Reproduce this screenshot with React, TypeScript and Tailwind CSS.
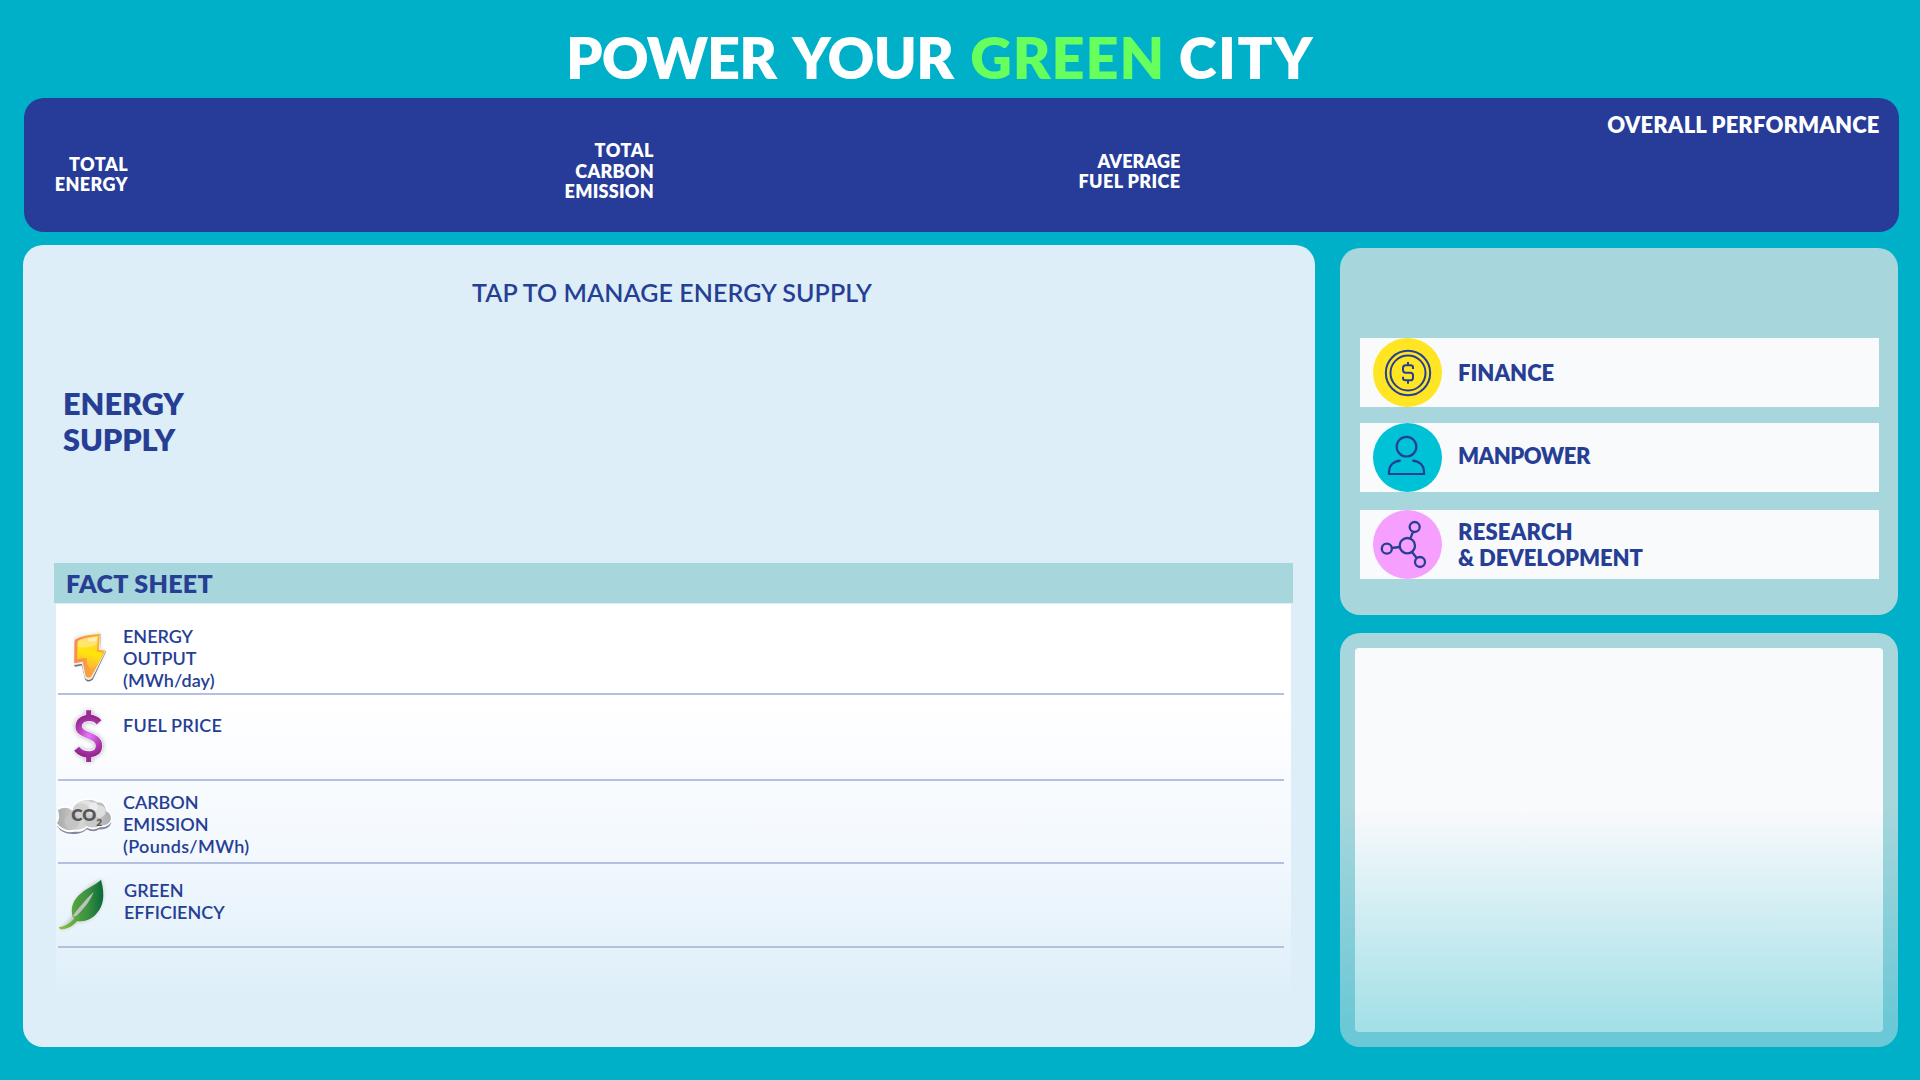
import React from 'react';

function BoltIcon() {
  return (
    <svg viewBox="54 6 132 174" className="ml-[11px] mt-[23px] h-[58px] w-[44px] overflow-visible">
      <defs>
        <linearGradient id="boltFill" x1="0.6" y1="0" x2="0.4" y2="1">
          <stop offset="0" stopColor="#ffc930" />
          <stop offset="0.5" stopColor="#ffe60a" />
          <stop offset="1" stopColor="#fbb03c" />
        </linearGradient>
        <linearGradient id="boltEdge" x1="0" y1="0.3" x2="1" y2="0.4">
          <stop offset="0" stopColor="#f98a54" />
          <stop offset="1" stopColor="#fdb52a" />
        </linearGradient>
        <filter id="glow" x="-40%" y="-40%" width="180%" height="180%">
          <feGaussianBlur stdDeviation="7" />
        </filter>
      </defs>
      <path d="M80 40Q115 34 152 26L148 78L166 80L126 158L114 158L103 112L80 118Z" fill="#777" opacity="0.5" filter="url(#glow)" />
      <path d="M80 42Q115 36 152 28L150 75L168 79L129 162Q119 171 111 162L101 118L79 122Z" fill="#737383" stroke="#737383" strokeWidth="6" strokeLinejoin="round" />
      <path d="M78 44Q86 31 152 25L150 72L168 76L128 157Q118 167 110 157L101 113L76 117Z" fill="#f3f1ee" stroke="#f3f1ee" strokeWidth="6" strokeLinejoin="round" />
      <path d="M79 48Q86 36 150 29L147 76L165 79L126 152Q119 160 112 152L103 107L78 112Z" fill="url(#boltEdge)" stroke="url(#boltEdge)" strokeWidth="5" strokeLinejoin="round" />
      <path d="M86 48Q98 39 148 33L143 80L161 83Q152 118 126 134Q111 118 113 98L84 103Z" fill="url(#boltFill)" />
      <path d="M86 49Q98 40 147 34L143 58Q120 72 85 66Z" fill="#fff" opacity="0.35" />
      <path d="M116 40L145 35L143 48Q130 52 118 49Z" fill="#fff" opacity="0.45" />
    </svg>
  );
}

function DollarIcon() {
  return (
    <svg viewBox="96 321 99 174" className="ml-[16px] mt-[12px] h-[58px] w-[33px] overflow-visible">
      <defs>
        <radialGradient id="dollarFill" gradientUnits="userSpaceOnUse" cx="147" cy="408" r="62">
          <stop offset="0" stopColor="#e67cfb" />
          <stop offset="0.5" stopColor="#b844bd" />
          <stop offset="1" stopColor="#93238e" />
        </radialGradient>
      </defs>
      <g fill="none" strokeLinejoin="miter">
        <g stroke="#777" opacity="0.5" strokeWidth="24" filter="url(#glow)">
          <path d="M175 366C158 351 116 350 115 380C115 409 177 402 178 437C177 471 130 469 112 447M146 330V352M146 464V486" />
        </g>
        <g stroke="#f4ecf4" strokeWidth="24">
          <path d="M177 367C160 347 116 349 116 380C116 410 177 402 177 437C177 471 129 469 110 446" />
          <path d="M146 328V355M146 462V488" strokeWidth="20" />
        </g>
        <g stroke="url(#dollarFill)" strokeWidth="19">
          <path d="M177 367C160 347 116 349 116 380C116 410 177 402 177 437C177 471 129 469 110 446" />
        </g>
        <path d="M138.500 331H153.500V354H138.500ZM138.500 464H153.500V486H138.500Z" fill="#9b2b97" />
      </g>
    </svg>
  );
}

function CloudIcon() {
  return (
    <svg viewBox="18 18 168 120" className="mt-[15px] h-[40px] w-[56px] overflow-visible">
      <defs>
        <linearGradient id="cloudFill" x1="0" y1="0" x2="1" y2="0">
          <stop offset="0" stopColor="#a9a9a9" />
          <stop offset="0.45" stopColor="#d6d6d6" />
          <stop offset="1" stopColor="#adadad" />
        </linearGradient>
      </defs>
      <path d="M21 108Q38 137 82 131Q102 128 110 118Q130 130 148 118Q176 120 184 98L150 90L40 90Z" fill="#85859b" />
      <path d="M24 54Q52 44 67 54Q76 28 112 25Q130 21 142 32Q168 27 171 60Q187 66 186 86Q182 112 150 112Q130 124 111 113Q98 128 74 125Q40 132 20 106L20 86Q28 84 22 70Z" fill="#fff" />
      <path d="M24 60Q50 45 67 62Q76 33 106 31Q130 26 140 37Q164 33 168 63Q183 70 183 86Q178 108 148 107Q130 118 110 108Q96 121 72 119Q40 126 21 99Q32 86 24 60Z" fill="url(#cloudFill)" />
      <circle cx="105" cy="62" r="31" fill="#e3e3e3" />
      <circle cx="93" cy="65" r="26" fill="#d2d2d2" />
      <circle cx="148" cy="64" r="19" fill="#dedede" />
      <circle cx="131" cy="50" r="13" fill="#ececec" />
      <circle cx="66" cy="94" r="22" fill="#c4c4c4" />
      <circle cx="123" cy="92" r="19" fill="#c9c9c9" />
      <text x="64" y="93" fontSize="49" fontWeight="800" fill="#575757" textLength="75" lengthAdjust="spacingAndGlyphs">CO</text>
      <text x="139" y="107" fontSize="30" fontWeight="800" fill="#575757">2</text>
    </svg>
  );
}

function LeafIcon() {
  return (
    <svg viewBox="18 258 159 168" className="mt-[12px] h-[56px] w-[53px] overflow-visible">
      <defs>
        <linearGradient id="leafFill" gradientUnits="userSpaceOnUse" x1="66" y1="330" x2="160" y2="330">
          <stop offset="0" stopColor="#58a83c" />
          <stop offset="0.5" stopColor="#3b9140" />
          <stop offset="1" stopColor="#066a38" />
        </linearGradient>
        <linearGradient id="stemFill" gradientUnits="userSpaceOnUse" x1="27" y1="0" x2="90" y2="0">
          <stop offset="0" stopColor="#8cc63f" />
          <stop offset="1" stopColor="#4fa03c" />
        </linearGradient>
      </defs>
      <path d="M153 270Q167 322 143 360Q120 396 78 394Q60 415 28 418Q60 400 72 372Q64 318 153 270Z" fill="#777" opacity="0.5" filter="url(#glow)" />
      <path d="M153 269C166 318 160 347 141 369C125 389 104 396 82 393L68 380C60 352 70 328 95 308C112 293 136 286 153 269Z" fill="url(#leafFill)" />
      <path d="M131 306C112 323 90 350 70 374L70 380L78 379C100 358 118 338 131 306Z" fill="#bcc2bd" />
      <path d="M80 379C62 399 46 410 27 411C26 417 32 419 39 418C58 415 72 404 82 393L92 389L90 376Z" fill="url(#stemFill)" />
    </svg>
  );
}

function FinanceIcon() {
  return (
    <svg viewBox="129 54 207 207" className="ml-[13px] size-[69px]" fill="none" stroke="#263f94">
      <circle cx="232.5" cy="157.5" r="103.5" fill="#ffe522" stroke="none" />
      <circle cx="234" cy="159" r="66.500" strokeWidth="6" />
      <circle cx="234" cy="159" r="52.5" strokeWidth="6" />
      <path d="M249 147V142Q249 136 241 136H227Q219 136 219 144V150Q219 158 227 158H241Q249 158 249 166V173Q249 181 241 181H227Q219 181 219 174V170M234 126V136M234 181V191" strokeWidth="6" />
    </svg>
  );
}

function PersonIcon() {
  return (
    <svg viewBox="129 309 207 207" className="ml-[13px] size-[69px]" fill="none" stroke="#263f94">
      <circle cx="232.5" cy="412.5" r="103.5" fill="#00c2d6" stroke="none" />
      <circle cx="229.500" cy="380" r="29.500" strokeWidth="6.5" />
      <path d="M212 422C190 423 177 437 177 456V462H282V456C282 437 269 423 247 422" strokeWidth="6.5" />
    </svg>
  );
}

function ResearchIcon() {
  return (
    <svg viewBox="129 570 207 207" className="ml-[13px] size-[69px]" fill="none" stroke="#263f94">
      <circle cx="232.5" cy="673.5" r="103.5" fill="#f69fff" stroke="none" />
      <g strokeWidth="7">
        <circle cx="232" cy="677" r="23" />
        <circle cx="254" cy="621" r="15" />
        <circle cx="170.500" cy="686" r="15" />
        <circle cx="270" cy="726" r="15" />
        <path d="M241 655L249 636M209 681L186 684M246 696L260 714" />
      </g>
    </svg>
  );
}

type FactProps = { icon: React.ReactNode; row: string; text: string; lines: [string, string][] };

function FactRow({ icon, row, text, lines }: FactProps) {
  return (
    <div className={row}>
      <div className="flex h-full items-start">
        <div className="w-[67px] shrink-0">{icon}</div>
        <div className={text}>
          {lines.map(([line, tracking]) => (
            <div key={line} className={tracking}>{line}</div>
          ))}
        </div>
      </div>
      <div className="-mt-[2px] ml-[2px] mr-[7px] h-[2px] bg-[#b3c0e2]" />
    </div>
  );
}

export default function App() {
  return (
    <div className="flex h-[1080px] w-[1920px] flex-col overflow-hidden bg-[#00b0c8] font-['Lato',sans-serif] font-extrabold text-[#263f94]">
      <h1 className="flex h-[98px] whitespace-nowrap pl-[566px] pt-[27px] text-[57.6px] leading-[60px] text-white">
        <span className="mr-[16px] tracking-[-0.9px]">POWER</span>
        <span className="mr-[16.5px] tracking-[-0.6px]">YOUR</span>
        <span className="mr-[13.5px] tracking-[1px] text-[#66ff5e]">GREEN</span>
        <span className="tracking-[1.5px]">CITY</span>
      </h1>

      <header className="ml-[24px] grid h-[134px] w-[1875px] shrink-0 grid-cols-[104px_526px_526.5px_699px] rounded-[20px] bg-[#263c98] text-right text-[18px] text-white">
        <div className="pt-[56px] leading-[20px] tracking-[0.4px]">TOTAL<br />ENERGY</div>
        <div className="pt-[42px] leading-[20.5px] tracking-[0.25px]"><span className="tracking-[0.5px]">TOTAL</span><br />CARBON<br />EMISSION</div>
        <div className="pt-[53px] leading-[20.3px] tracking-[0.1px]">AVERAGE<br /><span className="tracking-[0.4px]">FUEL PRICE</span></div>
        <div className="pt-[15px] text-[22px] leading-[24px] tracking-[0.12px]">OVERALL PERFORMANCE</div>
      </header>

      <div className="flex">
        <main className="ml-[23px] mt-[13px] flex h-[802px] w-[1292px] flex-col rounded-[20px] bg-[#ddeef8]">
          <div className="h-[140px] pl-[449px] pt-[32px] text-[25px] font-semibold leading-[30px] tracking-[0.08px]">TAP TO MANAGE ENERGY SUPPLY</div>
          <div className="h-[178px] pl-[40px] pt-px text-[30.7px] leading-[36px]">
            ENERGY<br /><span className="tracking-[-0.1px]">SUPPLY</span>
          </div>
          <div className="ml-[31px] flex h-[40px] w-[1239px] items-center bg-[#a7d6dc] pl-[12px] text-[25px] leading-[30px] tracking-[0.35px]">FACT SHEET</div>
          <section className="ml-[33px] mt-px h-[398px] w-[1235px] bg-[linear-gradient(180deg,#ffffff_0%,#ffffff_25%,#f2f8fe_64%,#ddeef8_100%)] text-[18px] font-semibold leading-[21.6px]">
            <FactRow icon={<BoltIcon />} row="h-[91px]" text="pt-[21px] leading-[22px]" lines={[['ENERGY', 'tracking-[0px]'], ['OUTPUT', 'tracking-[0px]'], ['(MWh/day)', 'tracking-[0.1px]']]} />
            <FactRow icon={<DollarIcon />} row="h-[86px]" text="pt-[19.5px]" lines={[['FUEL PRICE', 'tracking-[0.2px]']]} />
            <FactRow icon={<CloudIcon />} row="h-[83px]" text="pt-[10px] leading-[22px]" lines={[['CARBON', 'tracking-[-0.05px]'], ['EMISSION', 'tracking-[0px]'], ['(Pounds/MWh)', 'tracking-[0.35px]']]} />
            <FactRow icon={<LeafIcon />} row="h-[84px]" text="pl-px pt-[15px] leading-[22px]" lines={[['GREEN', 'tracking-[0.1px]'], ['EFFICIENCY', 'tracking-[0px]']]} />
          </section>
        </main>

        <aside className="ml-[25px] mt-[16px] flex w-[558px] flex-col gap-[18px]">
          <div className="h-[367px] rounded-[20px] bg-[#a7d6dc] pl-[20px] pr-[19px] pt-[90px] text-[22px] leading-[26px]">
            <div className="flex h-[69px] items-center gap-[16px] bg-[#f9fafc]">
              <FinanceIcon />
              <div>FINANCE</div>
            </div>
            <div className="mt-[16px] flex h-[69px] items-center gap-[16px] bg-[#f9fafc]">
              <PersonIcon />
              <div className="pb-[4px] tracking-[-0.5px]">MANPOWER</div>
            </div>
            <div className="mt-[18px] flex h-[69px] items-center gap-[16px] bg-[#f9fafc]">
              <ResearchIcon />
              <div>
                <span className="tracking-[0.2px]">RESEARCH</span><br /><span className="tracking-[-0.1px]">&amp; DEVELOPMENT</span>
              </div>
            </div>
          </div>
          <div className="h-[414px] rounded-[20px] bg-[linear-gradient(180deg,#a7d6dc_0%,#a7d6dc_42%,#6bc8d6_95%)] px-[15px] pt-[15px]">
            <div className="h-[384px] rounded-[4px] bg-[linear-gradient(180deg,#f9fafc_0%,#f9fafc_42%,#a5e0e8_98%)]" />
          </div>
        </aside>
      </div>
    </div>
  );
}
